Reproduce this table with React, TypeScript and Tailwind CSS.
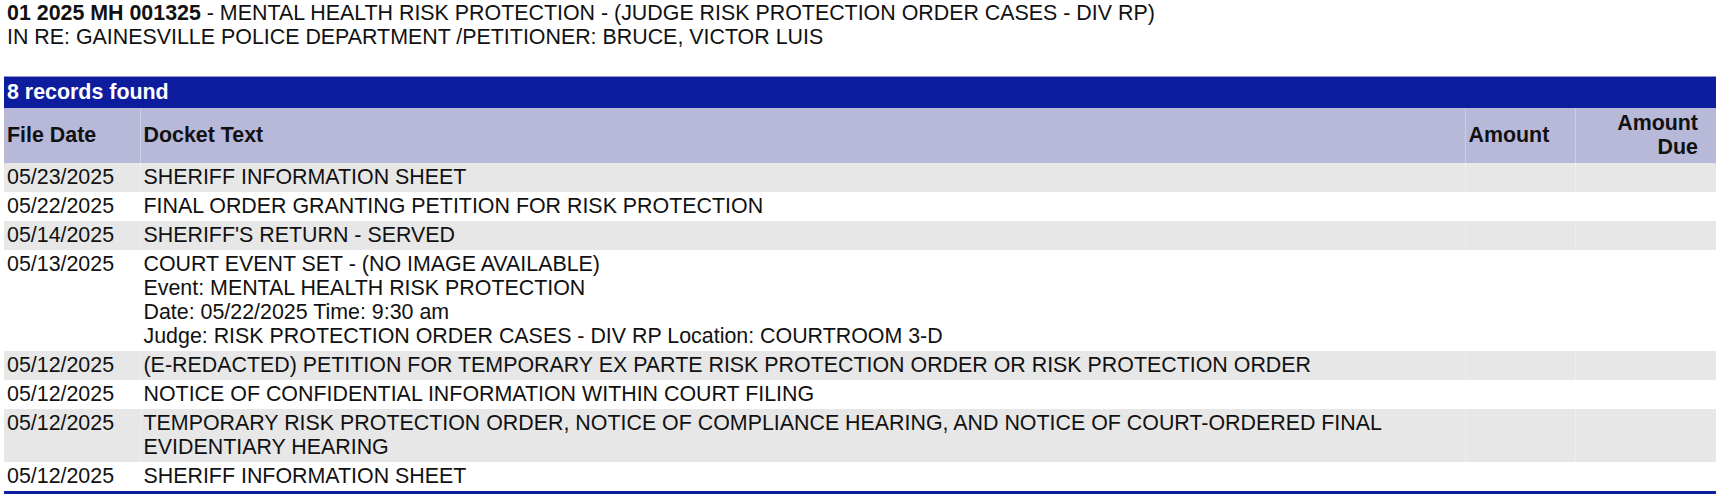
const rows: { date: string; lines: string[] }[] = [
  { date: "05/23/2025", lines: ["SHERIFF INFORMATION SHEET"] },
  { date: "05/22/2025", lines: ["FINAL ORDER GRANTING PETITION FOR RISK PROTECTION"] },
  { date: "05/14/2025", lines: ["SHERIFF'S RETURN - SERVED"] },
  {
    date: "05/13/2025",
    lines: [
      "COURT EVENT SET - (NO IMAGE AVAILABLE)",
      "Event: MENTAL HEALTH RISK PROTECTION",
      "Date: 05/22/2025 Time: 9:30 am",
      "Judge: RISK PROTECTION ORDER CASES - DIV RP Location: COURTROOM 3-D",
    ],
  },
  {
    date: "05/12/2025",
    lines: ["(E-REDACTED) PETITION FOR TEMPORARY EX PARTE RISK PROTECTION ORDER OR RISK PROTECTION ORDER"],
  },
  { date: "05/12/2025", lines: ["NOTICE OF CONFIDENTIAL INFORMATION WITHIN COURT FILING"] },
  {
    date: "05/12/2025",
    lines: [
      "TEMPORARY RISK PROTECTION ORDER, NOTICE OF COMPLIANCE HEARING, AND NOTICE OF COURT-ORDERED FINAL",
      "EVIDENTIARY HEARING",
    ],
  },
  { date: "05/12/2025", lines: ["SHERIFF INFORMATION SHEET"] },
];

const App = () => {
  return (
    <div className="bg-white text-black font-['Liberation_Sans',Arial,sans-serif] w-[1716px]">
      <div className="pt-[1px] pl-[7px] text-[21.4px] leading-[24px] text-[#111]">
        <div>
          <span className="font-bold">01 2025 MH 001325</span> - MENTAL HEALTH RISK PROTECTION - (JUDGE RISK
          PROTECTION ORDER CASES - DIV RP)
        </div>
        <div>IN RE: GAINESVILLE POLICE DEPARTMENT /PETITIONER: BRUCE, VICTOR LUIS</div>
      </div>

      <table className="mt-[27px] ml-[4px] w-[1712px] table-fixed border-collapse text-[21.4px] leading-[24px] text-[#111] border-b-[3px] border-[#0e1d9e]">
        <colgroup>
          <col className="w-[136px]" />
          <col />
          <col className="w-[110px]" />
          <col className="w-[140px]" />
        </colgroup>
        <thead>
          <tr>
            <th
              colSpan={4}
              className="bg-[#0e1d9e] border-t border-[#8f95d0] text-white text-left font-bold px-[3px] h-[31px] pb-[1px]"
            >
              8 records found
            </th>
          </tr>
          <tr className="bg-[#b8b9d9] font-bold">
            <th className="text-left px-[3px] h-[55px] align-middle">File Date</th>
            <th className="text-left px-[3px] align-middle border-l border-white/30">Docket Text</th>
            <th className="text-left px-[2px] align-middle border-l border-white/30">Amount</th>
            <th className="text-right pr-[18px] pl-[3px] align-middle border-l border-white/30">
              Amount
              <br />
              Due
            </th>
          </tr>
        </thead>
        <tbody>
          {rows.map((r, i) => (
            <tr key={i} className={i % 2 === 0 ? "bg-[#e7e7e7]" : "bg-white"}>
              <td className="align-top px-[3px] py-[2.5px]">{r.date}</td>
              <td className="align-top px-[3px] py-[2.5px] border-l border-white/30">
                {r.lines.map((l, j) => (
                  <div key={j}>{l}</div>
                ))}
              </td>
              <td className="align-top px-[3px] py-[2.5px] border-l border-white/30"></td>
              <td className="align-top px-[3px] py-[2.5px] border-l border-white/30"></td>
            </tr>
          ))}
        </tbody>
      </table>
    </div>
  );
};

export default App;
